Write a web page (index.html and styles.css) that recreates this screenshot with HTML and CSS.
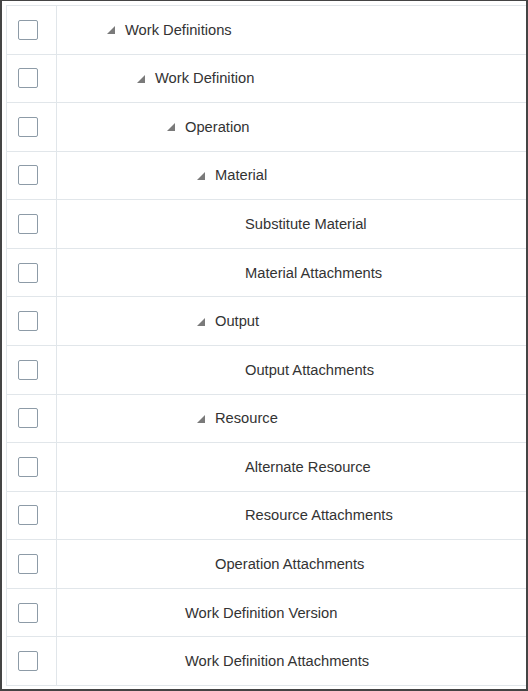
FILE: index.html
```html
<!DOCTYPE html>
<html>
<head>
<meta charset="utf-8">
<link rel="stylesheet" href="styles.css">
</head>
<body>
<div class="frame">
  <div class="tree">
    <div class="row"><div class="sel"><span class="box"></span></div><div class="label l1"><span class="tri"></span>Work Definitions</div></div>
    <div class="row"><div class="sel"><span class="box"></span></div><div class="label l2"><span class="tri"></span>Work Definition</div></div>
    <div class="row"><div class="sel"><span class="box"></span></div><div class="label l3"><span class="tri"></span>Operation</div></div>
    <div class="row"><div class="sel"><span class="box"></span></div><div class="label l4"><span class="tri"></span>Material</div></div>
    <div class="row"><div class="sel"><span class="box"></span></div><div class="label l5">Substitute Material</div></div>
    <div class="row"><div class="sel"><span class="box"></span></div><div class="label l5">Material Attachments</div></div>
    <div class="row"><div class="sel"><span class="box"></span></div><div class="label l4"><span class="tri"></span>Output</div></div>
    <div class="row"><div class="sel"><span class="box"></span></div><div class="label l5">Output Attachments</div></div>
    <div class="row"><div class="sel"><span class="box"></span></div><div class="label l4"><span class="tri"></span>Resource</div></div>
    <div class="row"><div class="sel"><span class="box"></span></div><div class="label l5">Alternate Resource</div></div>
    <div class="row"><div class="sel"><span class="box"></span></div><div class="label l5">Resource Attachments</div></div>
    <div class="row"><div class="sel"><span class="box"></span></div><div class="label l4">Operation Attachments</div></div>
    <div class="row"><div class="sel"><span class="box"></span></div><div class="label l3">Work Definition Version</div></div>
    <div class="row"><div class="sel"><span class="box"></span></div><div class="label l3">Work Definition Attachments</div></div>
  </div>
</div>
</body>
</html>
```
FILE: styles.css
```css
html, body {
  margin: 0;
  padding: 0;
  background: #ffffff;
}
.frame {
  box-sizing: border-box;
  width: 528px;
  height: 691px;
  border-style: solid;
  border-color: #444444;
  border-width: 1px 2px 2px 2px;
  padding: 4px 0 3px 4px;
  font-family: "Liberation Sans", Arial, sans-serif;
  font-size: 14.7px;
  color: #333333;
}
.tree {
  box-sizing: border-box;
  height: 681px;
  border-left: 1px solid #e1e6ea;
  border-top: 1px solid #e1e6ea;
  display: grid;
  grid-template-rows: repeat(14, 1fr);
}
.row {
  display: grid;
  grid-template-columns: 50px 1fr;
  border-bottom: 1px solid #e1e6ea;
}
.sel {
  border-right: 1px solid #e1e6ea;
  display: flex;
  align-items: center;
  padding-left: 11px;
}
.box {
  box-sizing: border-box;
  width: 20px;
  height: 20px;
  border: 1px solid #8d9ba7;
  border-radius: 2px;
  background: #fff;
}
.label {
  display: flex;
  align-items: center;
  white-space: nowrap;
}
.l1 { padding-left: 68px; }
.l2 { padding-left: 98px; }
.l3 { padding-left: 128px; }
.l4 { padding-left: 158px; }
.l5 { padding-left: 188px; }
.tri {
  width: 0;
  height: 0;
  border-style: solid;
  border-width: 0 0 8px 8px;
  border-color: transparent transparent #7a7a7a transparent;
  margin-left: -18px;
  margin-right: 10px;
  margin-top: 1px;
}
```
